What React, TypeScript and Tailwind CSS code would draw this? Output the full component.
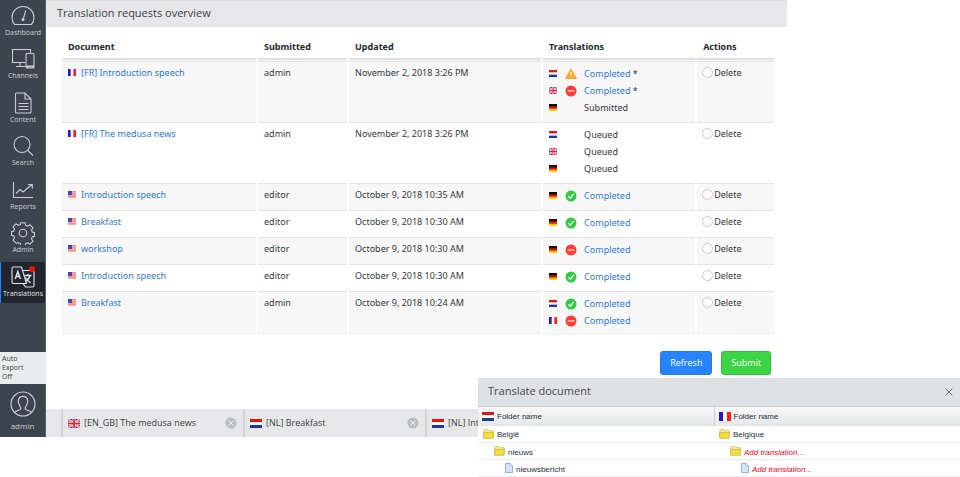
import type { ReactNode } from "react";

type Country = "fr" | "nl" | "gb" | "de" | "us";
type Status = "warning" | "error" | "ok";

type Translation = { country: Country; status?: Status; label: string; changed?: boolean };

type Request = {
  country: Country;
  document: string;
  submitted: string;
  updated: string;
  translations: Translation[];
};

const requests: Request[] = [
  {
    country: "fr",
    document: "[FR] Introduction speech",
    submitted: "admin",
    updated: "November 2, 2018 3:26 PM",
    translations: [
      { country: "nl", status: "warning", label: "Completed", changed: true },
      { country: "gb", status: "error", label: "Completed", changed: true },
      { country: "de", label: "Submitted" },
    ],
  },
  {
    country: "fr",
    document: "[FR] The medusa news",
    submitted: "admin",
    updated: "November 2, 2018 3:26 PM",
    translations: [
      { country: "nl", label: "Queued" },
      { country: "gb", label: "Queued" },
      { country: "de", label: "Queued" },
    ],
  },
  {
    country: "us",
    document: "Introduction speech",
    submitted: "editor",
    updated: "October 9, 2018 10:35 AM",
    translations: [{ country: "de", status: "ok", label: "Completed" }],
  },
  {
    country: "us",
    document: "Breakfast",
    submitted: "editor",
    updated: "October 9, 2018 10:30 AM",
    translations: [{ country: "de", status: "ok", label: "Completed" }],
  },
  {
    country: "us",
    document: "workshop",
    submitted: "editor",
    updated: "October 9, 2018 10:30 AM",
    translations: [{ country: "de", status: "error", label: "Completed" }],
  },
  {
    country: "us",
    document: "Introduction speech",
    submitted: "editor",
    updated: "October 9, 2018 10:30 AM",
    translations: [{ country: "de", status: "ok", label: "Completed" }],
  },
  {
    country: "us",
    document: "Breakfast",
    submitted: "admin",
    updated: "October 9, 2018 10:24 AM",
    translations: [
      { country: "nl", status: "ok", label: "Completed" },
      { country: "fr", status: "error", label: "Completed" },
    ],
  },
];

const flagShapes: Record<Country, ReactNode> = {
  fr: (
    <>
      <path fill="#fff" d="M0 0h12v8H0z" />
      <path fill="#2b12d6" d="M0 0h4v8H0z" />
      <path fill="#fb1f1f" d="M8 0h4v8H8z" />
    </>
  ),
  nl: (
    <>
      <path fill="#fff" d="M0 0h12v8H0z" />
      <path fill="#e3170f" d="M0 0h12v2.7H0z" />
      <path fill="#1c3a9c" d="M0 5.3h12V8H0z" />
    </>
  ),
  gb: (
    <>
      <path fill="#3a2aa8" d="M0 0h12v8H0z" />
      <path stroke="#fff" strokeWidth="1.8" d="m0 0 12 8M12 0 0 8" />
      <path stroke="#e8303a" strokeWidth=".7" d="m0 0 12 8M12 0 0 8" />
      <path stroke="#fff" strokeWidth="3" d="M6 0v8M0 4h12" />
      <path stroke="#e8202a" strokeWidth="1.7" d="M6 0v8M0 4h12" />
    </>
  ),
  de: (
    <>
      <path fill="#fbc80a" d="M0 0h12v8H0z" />
      <path fill="#e01b0c" d="M0 0h12v5.4H0z" />
      <path fill="#0a0a0a" d="M0 0h12v2.8H0z" />
    </>
  ),
  us: (
    <>
      <path fill="#f8b3ae" d="M0 0h12v8H0z" />
      <path stroke="#ee7f79" d="M0 .5h12M0 2.5h12M0 4.5h12M0 6.5h12" />
      <path fill="#3f48b5" d="M0 0h6v4.6H0z" />
    </>
  ),
};

function Flag({ country, large }: { country: Country; large?: boolean }) {
  return (
    <svg
      viewBox="0 0 12 8"
      preserveAspectRatio="none"
      className={large ? "h-[9px] w-3 shrink-0" : "h-[7px] w-2 shrink-0"}
      aria-hidden="true"
    >
      {flagShapes[country]}
    </svg>
  );
}

function StatusIcon({ status }: { status: Status }) {
  return (
    <svg viewBox="0 0 12 12" className="size-3" fill="none" aria-hidden="true">
      {status === "warning" && (
        <>
          <path fill="#ffa526" stroke="#ffa526" strokeLinejoin="round" d="M6 1 11.400 10.500H.6z" />
          <path stroke="#fff" strokeWidth="1.2" d="M6 3.800v3.400M6 8.200v1.300" />
        </>
      )}
      {status === "error" && (
        <>
          <circle cx="6" cy="6" r="5.5" fill="#ff3b36" />
          <path stroke="#ffd9d6" strokeWidth="1.3" d="M2.6 6h6.8" />
        </>
      )}
      {status === "ok" && (
        <>
          <circle cx="6" cy="6" r="5.5" fill="#33cc41" />
          <path stroke="#fff" strokeWidth="1.3" d="m3.3 6.2 2 2 3.4-4.4" />
        </>
      )}
    </svg>
  );
}

const navItems: { label: string; icon: ReactNode }[] = [
  {
    label: "Dashboard",
    icon: (
      <>
        <path d="M3.6 20.5C1.9 18.700 1 16.400 1 13.500a11 11 0 0 1 22 0c0 2.900-.9 5.200-2.600 7z" />
        <path d="m12.400 14.500 2.400-8.200" />
        <circle cx="12" cy="15.500" r="1" fill="currentColor" />
      </>
    ),
  },
  {
    label: "Channels",
    icon: (
      <>
        <path d="M14 15.500H1.500V2.500h18v4M5 19.500h9M9 15.500v4" />
        <rect x="15" y="6.500" width="8" height="14.500" rx="1" />
        <path d="M15 19.500h8" strokeWidth="2" />
      </>
    ),
  },
  {
    label: "Content",
    icon: (
      <>
        <path d="M5.500 2h8.500l6 6V21a1 1 0 0 1-1 1H5.500a1 1 0 0 1-1-1V3a1 1 0 0 1 1-1z" />
        <path d="M14 2v6h6M7.500 12.500h10M7.500 15.500h10M7.500 18.500h10" />
      </>
    ),
  },
  {
    label: "Search",
    icon: (
      <>
        <circle cx="11" cy="10.500" r="8" />
        <path d="m16.800 16.300 5.200 5.200" />
      </>
    ),
  },
  {
    label: "Reports",
    icon: (
      <>
        <path d="M2.500 4v15.500H22" />
        <path d="m5 15.500 4-4 3 2.500 3-2.500 6-5M17 6.500h4.300v4.200" />
      </>
    ),
  },
  {
    label: "Admin",
    icon: (
      <>
        <circle cx="12" cy="12" r="3.800" />
        <path
          d="M9.800 1.800h4.400l.5 2.700 2 .8 2.300-1.500 3 3-1.500 2.300.8 2 2.200.5v3.800l-2.200.5-.8 2 1.500 2.300-3 3-2.300-1.500-2 .8-.5 2.200H9.800l-.5-2.200-2-.8L5 22.200l-3-3 1.500-2.300-.8-2-2.200-.5v-3.800l2.200-.5.8-2L2 5.800l3-3 2.300 1.500 2-.8z"
          strokeLinejoin="round"
        />
      </>
    ),
  },
  {
    label: "Translations",
    icon: (
      <>
        <path d="M2.500 2h8l5 16.500h-13a1.500 1.500 0 0 1-1.500-1.500V3.500A1.500 1.500 0 0 1 2.500 2z" />
        <path d="M11.500 5.500h10a1.500 1.500 0 0 1 1.500 1.500v13.500a1.500 1.500 0 0 1-1.500 1.500h-7l-2.500-3.500" />
        <path
          strokeWidth="1.400"
          d="m4.200 14 2.600-7.500L9.400 14M5 11.500h3.600M13.500 10.500h7M17 9v1.500M19 10.500c-.7 3-2.500 4.800-4 5.700M14.500 12.500c1 2 3 4 5 5.200"
        />
      </>
    ),
  },
];

function Sidebar() {
  return (
    <aside className="flex w-[46px] shrink-0 flex-col border-r border-[#58616a] bg-[#3c444d] text-[#c9ced3]">
      <nav className="flex h-[303px] flex-col gap-[2px] pt-px">
        {navItems.map((item) => {
          const active = item.label === "Translations";
          return (
            <a
              key={item.label}
              href="#"
              className={`relative flex flex-1 flex-col items-center border-l pt-[3px] text-[7px] leading-[9px] ${
                active ? "border-[#2684ff] bg-[#22252e] text-[#e3e5e8]" : "border-transparent"
              }`}
            >
              <svg
                viewBox="0 0 24 24"
                className="size-6 shrink-0"
                fill="none"
                stroke="currentColor"
                strokeWidth="1.100"
                aria-hidden="true"
              >
                {item.icon}
              </svg>
              <span className="whitespace-nowrap">{item.label}</span>
              {active && (
                <span className="absolute top-1 right-[10px] size-[6px] rounded-full bg-[#f0150a]" />
              )}
            </a>
          );
        })}
      </nav>
      <div className="mt-auto -mr-px bg-[#e9ebec] pt-[2px] pb-[3px] pl-[2px] text-[7px] leading-[9px] text-[#3a3f44]">
        Auto
        <br />
        Export
        <br />
        Off
      </div>
      <a href="#" className="flex h-[53px] flex-col items-center gap-[4px] pt-[7px] text-[8px] leading-[10px]">
        <svg
          viewBox="0 0 26 26"
          className="size-[26px] shrink-0"
          fill="none"
          stroke="currentColor"
          strokeWidth="1.200"
          aria-hidden="true"
        >
          <circle cx="13" cy="13" r="12" />
          <path d="M4.500 21.300c1-1.600 5.900-2.100 6.300-3.400.3-1-.3-1.700-1-2.900-1-1.600-1.700-3.200-1.500-5.200C8.600 7 10.500 5.300 13 5.300s4.400 1.700 4.700 4.500c.2 2-.5 3.600-1.500 5.200-.7 1.200-1.300 1.900-1 2.900.4 1.300 5.300 1.800 6.300 3.400" />
        </svg>
        admin
      </a>
    </aside>
  );
}

function RequestRow({ request, index }: { request: Request; index: number }) {
  const cell = `border-t border-[#e2e2e2] pt-[2px] pb-[6px] pl-[6px] align-top ${
    index % 2 === 0 ? "bg-[#f7f7f7]" : "bg-white"
  }`;

  return (
    <tr>
      <td className={cell}>
        <span className="flex items-center gap-[5px]">
          <Flag country={request.country} />
          <a href="#" className="text-[#2f7ad6]">
            {request.document}
          </a>
        </span>
      </td>
      <td className={cell}>{request.submitted}</td>
      <td className={cell}>{request.updated}</td>
      <td className={cell}>
        <ul className="pt-px">
          {request.translations.map((translation) => (
            <li key={translation.country} className="grid grid-cols-[16px_19px_auto] items-center">
              <Flag country={translation.country} />
              <span>{translation.status && <StatusIcon status={translation.status} />}</span>
              <span>
                {translation.status ? (
                  <a href="#" className="text-[#2f7ad6]">
                    {translation.label}
                  </a>
                ) : (
                  translation.label
                )}
                {translation.changed && " *"}
              </span>
            </li>
          ))}
        </ul>
      </td>
      <td className={cell}>
        <label className="flex items-center gap-px">
          <input
            type="radio"
            name="delete"
            value={index}
            className="-ml-px size-[11px] appearance-none rounded-full border border-[#c9c9c9] bg-white checked:bg-[#2684ff]"
          />
          Delete
        </label>
      </td>
    </tr>
  );
}

const columns = [
  { title: "Document", width: "w-[194px]" },
  { title: "Submitted", width: "w-[89px]" },
  { title: "Updated", width: "w-[192px]" },
  { title: "Translations", width: "w-[152px]" },
  { title: "Actions", width: "w-[77px]" },
];

function RequestTable() {
  return (
    <table className="w-full table-fixed border-separate border-spacing-x-[2px] border-spacing-y-0 text-left font-['Noto_Sans',sans-serif] text-[9px] leading-[17px] text-[#33373b]">
      <thead>
        <tr>
          {columns.map((column) => (
            <th key={column.title} className={`p-0 pb-px font-bold text-[#22262b] ${column.width}`}>
              <div className="border-b-2 border-[#e0e0e0] pb-[3px] pl-[6px]">{column.title}</div>
            </th>
          ))}
        </tr>
      </thead>
      <tbody>
        {requests.map((request, index) => (
          <RequestRow key={index} request={request} index={index} />
        ))}
      </tbody>
    </table>
  );
}

const tabs: { country: Country; title: string }[] = [
  { country: "gb", title: "[EN_GB] The medusa news" },
  { country: "nl", title: "[NL] Breakfast" },
  { country: "nl", title: "[NL] Int" },
];

function DocumentTabs() {
  return (
    <footer className="flex h-7 overflow-hidden bg-[#e7e7e9] pl-[15px] text-[9px] text-[#3b3f44]">
      {tabs.map((tab) => (
        <div
          key={tab.title}
          className="flex w-[182px] shrink-0 items-center gap-[4px] border-l-2 border-[#d2d3d6] pr-[6px] pl-[5px]"
        >
          <Flag country={tab.country} large />
          <span>{tab.title}</span>
          <button type="button" aria-label={`Close ${tab.title}`} className="ml-auto">
            <svg viewBox="0 0 12 12" className="size-3" aria-hidden="true">
              <circle cx="6" cy="6" r="5.500" fill="#bbbdbf" />
              <path stroke="#f2f2f2" d="m3.500 3.500 5 5M8.500 3.500l-5 5" />
            </svg>
          </button>
        </div>
      ))}
    </footer>
  );
}

type TreeNode = { label: string; missing?: boolean };

const tree: { kind: "folder" | "document"; indent: string; nodes: TreeNode[] }[] = [
  { kind: "folder", indent: "pl-[5px]", nodes: [{ label: "België" }, { label: "Belgique" }] },
  {
    kind: "folder",
    indent: "pl-[16px]",
    nodes: [{ label: "nieuws" }, { label: "Add translation...", missing: true }],
  },
  {
    kind: "document",
    indent: "pl-[27px]",
    nodes: [{ label: "nieuwsbericht" }, { label: "Add translation...", missing: true }],
  },
];

function FolderIcon() {
  return (
    <svg viewBox="0 0 11 10" className="h-[10px] w-[11px] shrink-0" aria-hidden="true">
      <path fill="#f6eb9a" stroke="#c9a92c" strokeWidth=".6" d="M.8 8.800V1.500L1.600.6h3l.9 1.100h4.700v7z" />
      <path fill="#f2dc3e" stroke="#c9a92c" strokeWidth=".6" d="M.8 9.300.5 3.500h10l-.5 5.800z" />
    </svg>
  );
}

function DocumentIcon() {
  return (
    <svg viewBox="0 0 8 10" className="h-[10px] w-2 shrink-0" aria-hidden="true">
      <path fill="#d4e7f8" stroke="#7da3c8" strokeWidth=".8" d="M.5.5H5L7.500 3v6.500h-7z" />
      <path fill="#fff" stroke="#7da3c8" strokeWidth=".6" d="M5 .5V3h2.500" />
    </svg>
  );
}

function TranslateDialog() {
  return (
    <section
      role="dialog"
      aria-label="Translate document"
      className="absolute right-0 bottom-0 w-[482px] bg-white"
    >
      <header className="flex h-[29px] items-center justify-between border-b border-[#c9cccf] bg-[#dee2e5] pr-[7px] pl-[10px]">
        <h2 className="text-[11px] text-[#3f4a54]">Translate document</h2>
        <button type="button" aria-label="Close">
          <svg viewBox="0 0 8 8" className="size-2" stroke="#666a6e" aria-hidden="true">
            <path d="m.7.700 6.600 6.600M7.300.7.7 7.300" />
          </svg>
        </button>
      </header>
      <table className="w-full table-fixed border-collapse text-left font-['Liberation_Sans',sans-serif] text-[8px] leading-[10px] text-[#1f2f3d]">
        <thead>
          <tr className="h-[19px] bg-linear-to-b from-[#f8f8f8] to-[#e6e7e8]">
            <th className="w-[236px] p-0 pl-[4px] font-normal">
              <span className="flex items-center gap-[3px]">
                <Flag country="nl" large />
                <span className="pt-px">Folder name</span>
              </span>
            </th>
            <th className="border-l border-[#d0d0d0] p-0 pl-[4px] font-normal">
              <span className="flex items-center gap-[3px]">
                <Flag country="fr" large />
                <span className="pt-px">Folder name</span>
              </span>
            </th>
          </tr>
        </thead>
        <tbody>
          {tree.map((row, index) => (
            <tr key={index} className="h-[17px] border-b border-[#ededed]">
              {row.nodes.map((node, column) => (
                <td key={column} className={`p-0 ${row.indent}`}>
                  <span className="flex items-center gap-[3px]">
                    {row.kind === "folder" ? <FolderIcon /> : <DocumentIcon />}
                    {node.missing ? (
                      <a href="#" className="pt-[3px] text-[#ff0020] italic">
                        {node.label}
                      </a>
                    ) : (
                      <span className="pt-[3px]">{node.label}</span>
                    )}
                  </span>
                </td>
              ))}
            </tr>
          ))}
        </tbody>
      </table>
    </section>
  );
}

export default function App() {
  return (
    <div className="relative bg-white pb-10 font-['Open_Sans','Noto_Sans',sans-serif]">
      <div className="flex w-[82%]">
        <Sidebar />
        <main className="flex min-w-0 flex-1 flex-col">
          <h1 className="border-t border-[#dcdcde] bg-[#e7e7e9] px-[11px] pt-[3px] pb-[6px] text-[11px] leading-[17px] text-[#3b3f44]">
            Translation requests overview
          </h1>
          <div className="pt-[11px] pr-[11px] pl-[14px]">
            <RequestTable />
          </div>
          <div className="flex justify-end gap-[9px] pt-[16px] pr-4 pb-[34px] text-[9px] leading-[22px] text-white">
            <button type="button" className="rounded-[3px] border border-[#2377e6] bg-[#2684ff] px-[9px]">
              Refresh
            </button>
            <button type="button" className="rounded-[3px] border border-[#35bd3c] bg-[#3bd442] px-[9px]">
              Submit
            </button>
          </div>
          <DocumentTabs />
        </main>
      </div>
      <TranslateDialog />
    </div>
  );
}
